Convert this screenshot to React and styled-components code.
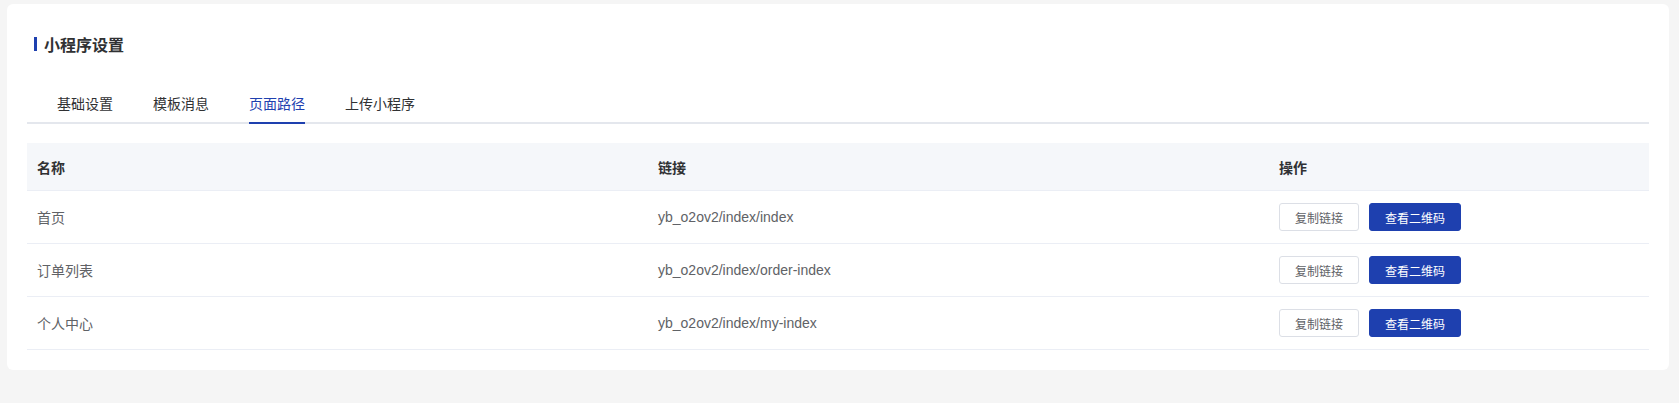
import React from 'react';
import styled, { createGlobalStyle } from 'styled-components';

const GlobalStyle = createGlobalStyle`
  body {
    margin: 0;
    background: #f5f5f5;
    font-family: "Liberation Sans", "Noto Sans CJK SC", sans-serif;
  }
`;

const Page = styled.div`
  padding: 4px 10px 0 7px;
`;

const Card = styled.div`
  background: #fff;
  border-radius: 6px;
  padding: 28px 20px 20px;
`;

const Title = styled.div`
  display: flex;
  align-items: center;
  height: 24px;
  padding-left: 7px;
  font-size: 16px;
  font-weight: 600;
  color: #303133;
  &::before {
    content: '';
    width: 3px;
    height: 14px;
    background: #1e40af;
    margin-right: 7px;
  }
`;

const TabBar = styled.div`
  display: flex;
  gap: 40px;
  margin-top: 30px;
  padding-left: 30px;
  border-bottom: 2px solid #e4e7ed;
`;

const Tab = styled.div`
  height: 36px;
  line-height: 36px;
  font-size: 14px;
  color: ${p => (p.$active ? '#1e40af' : '#303133')};
  position: relative;
  &::after {
    content: '';
    display: ${p => (p.$active ? 'block' : 'none')};
    position: absolute;
    left: 0;
    right: 0;
    bottom: -2px;
    height: 2px;
    background: #1e40af;
  }
`;

const Table = styled.div`
  margin-top: 19px;
`;

const Row = styled.div`
  display: grid;
  grid-template-columns: 621px 621px 1fr;
  align-items: center;
  height: ${p => (p.$head ? '47px' : '52px')};
  background: ${p => (p.$head ? '#f5f7fa' : '#fff')};
  border-bottom: 1px solid #ebeef5;
`;

const Cell = styled.div`
  padding: 0 10px;
  font-size: 14px;
  color: ${p => (p.$head ? '#303133' : '#606266')};
  font-weight: ${p => (p.$head ? 600 : 400)};
  display: flex;
  align-items: center;
  gap: 10px;
`;

const Button = styled.button`
  height: 28px;
  padding: 0 15px;
  font-size: 12px;
  font-family: inherit;
  border-radius: 3px;
  cursor: pointer;
  border: 1px solid ${p => (p.$primary ? '#1e40af' : '#dcdfe6')};
  background: ${p => (p.$primary ? '#1e40af' : '#fff')};
  color: ${p => (p.$primary ? '#fff' : '#606266')};
`;

const tabs = ['基础设置', '模板消息', '页面路径', '上传小程序'];

const pages = [
  { name: '首页', link: 'yb_o2ov2/index/index' },
  { name: '订单列表', link: 'yb_o2ov2/index/order-index' },
  { name: '个人中心', link: 'yb_o2ov2/index/my-index' },
];

export default function App() {
  return (
    <Page>
      <GlobalStyle />
      <Card>
        <Title>小程序设置</Title>
        <TabBar>
          {tabs.map(t => (
            <Tab key={t} $active={t === '页面路径'}>{t}</Tab>
          ))}
        </TabBar>
        <Table>
          <Row $head>
            <Cell $head>名称</Cell>
            <Cell $head>链接</Cell>
            <Cell $head>操作</Cell>
          </Row>
          {pages.map(p => (
            <Row key={p.link}>
              <Cell>{p.name}</Cell>
              <Cell>{p.link}</Cell>
              <Cell>
                <Button>复制链接</Button>
                <Button $primary>查看二维码</Button>
              </Cell>
            </Row>
          ))}
        </Table>
      </Card>
    </Page>
  );
}
